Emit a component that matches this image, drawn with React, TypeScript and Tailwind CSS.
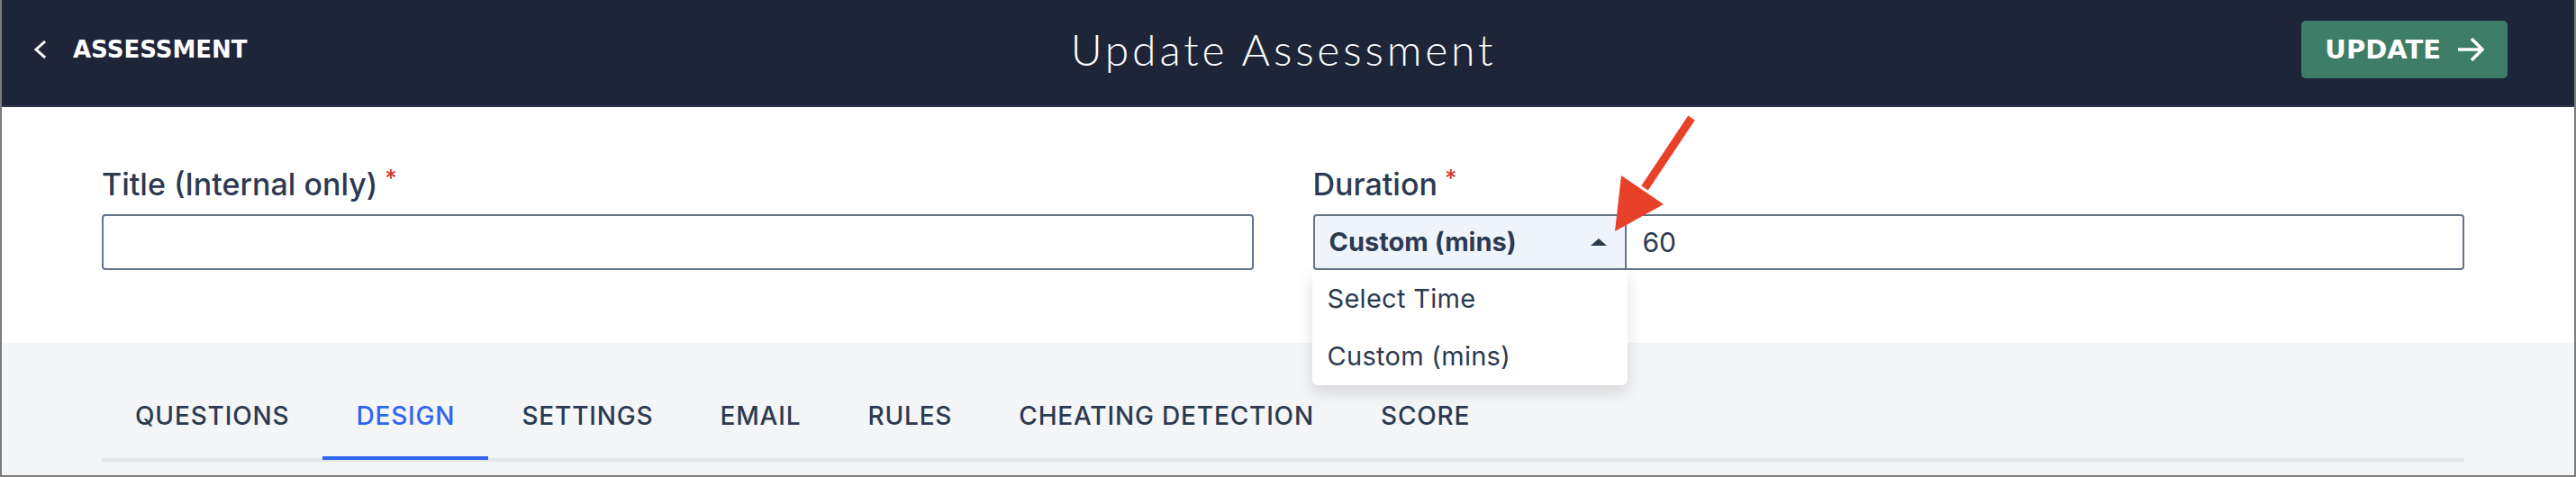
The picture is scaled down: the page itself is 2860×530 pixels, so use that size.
import React, { useState } from 'react';

const TABS = ['QUESTIONS', 'DESIGN', 'SETTINGS', 'EMAIL', 'RULES', 'CHEATING DETECTION', 'SCORE'];

const DURATION_OPTIONS = ['Select Time', 'Custom (mins)'];

const Required = () => (
  <span className="ml-[8px] align-top text-[26px] leading-none text-[#cf3a2e]">*</span>
);

export default function App() {
  const [activeTab, setActiveTab] = useState('DESIGN');
  const [duration] = useState('Custom (mins)');

  return (
    <div className="relative flex h-[530px] w-[2860px] flex-col overflow-hidden border-x-2 border-b-2 border-[#7c7c7c] bg-[#f4f5f7] font-['Inter',sans-serif] text-[#2c3a51]">
      {/* top bar */}
      <header className="grid h-[119px] shrink-0 grid-cols-[1fr_auto_1fr] items-center border-b-2 border-[#2f3750] bg-[#1f2539] pb-[7px] text-white">
        <div className="flex items-center gap-[30px] pl-[35px]">
          <svg width="14" height="20" viewBox="0 0 14 20" fill="none">
            <polyline points="12,2 3,10 12,18" stroke="white" strokeWidth="3" strokeLinecap="square" />
          </svg>
          <span className="font-['DejaVu_Sans',sans-serif] text-[26px] font-bold leading-none">ASSESSMENT</span>
        </div>
        <h1 className="pr-[10px] font-['Lato',sans-serif] text-[48px] font-light leading-none tracking-[0.08em]">Update Assessment</h1>
        <div className="flex justify-end pr-[74px]">
          <button className="flex h-[64px] items-center gap-[18px] rounded-[5px] bg-[#3e7d67] px-[26px]">
            <span className="font-['DejaVu_Sans',sans-serif] text-[29px] font-bold leading-none">UPDATE</span>
            <svg width="30" height="28" viewBox="0 0 30 28" fill="none">
              <path d="M1 14h27M16 2l12 12-12 12" stroke="white" strokeWidth="3.5" />
            </svg>
          </button>
        </div>
      </header>

      {/* form */}
      <section className="relative z-10 grid h-[262px] shrink-0 grid-cols-2 gap-[66px] bg-white pl-[111px] pr-[122px] pt-[66px]">
        <div>
          <label className="block text-[34px] font-medium leading-[40px]">
            Title (Internal only)
            <Required />
          </label>
          <input className="mt-[13px] block h-[62px] w-full rounded-[4px] border-2 border-[#64748b] bg-white px-[16px] text-[29px] outline-none" />
        </div>
        <div>
          <label className="block text-[34px] font-medium leading-[40px]">
            Duration
            <Required />
          </label>
          <div className="relative mt-[13px] flex h-[62px]">
            <div className="flex w-[348px] items-center justify-between rounded-l-[4px] border-2 border-[#64748b] bg-[#eff3fb] pl-[16px] pr-[20px]">
              <span className="text-[29px] font-bold">{duration}</span>
              <svg width="18" height="8" viewBox="0 0 18 8">
                <polygon points="0,8 9,0 18,8" fill="#2c3a51" />
              </svg>
            </div>
            <div className="flex flex-1 items-center rounded-r-[4px] border-2 border-l-0 border-[#64748b] pl-[18px] text-[30px]">
              60
            </div>
            <ul className="absolute left-[-1px] top-[62px] w-[350px] rounded-b-[6px] bg-white shadow-[0_8px_18px_rgba(0,0,0,0.13)]">
              {DURATION_OPTIONS.map((opt) => (
                <li key={opt} className="flex h-[64px] items-center px-[17px] text-[29px] tracking-[0.01em]">
                  {opt}
                </li>
              ))}
            </ul>
          </div>
        </div>
      </section>

      {/* tabs */}
      <div className="flex-1 pl-[111px] pr-[122px] pt-[40px]">
        <nav className="flex border-b-4 border-[#e4e5e7]">
          {TABS.map((tab) => (
            <button
              key={tab}
              onClick={() => setActiveTab(tab)}
              className={`relative flex h-[88px] items-center px-[37px] pb-[7px] text-[28px] font-medium tracking-[0.03em] ${
                activeTab === tab ? 'text-[#2f65ef]' : 'text-[#2c3a51]'
              }`}
            >
              {tab}
              {activeTab === tab && <span className="absolute bottom-[-2px] left-0 right-0 h-[4px] bg-[#2f65ef]" />}
            </button>
          ))}
        </nav>
      </div>

      {/* annotation arrow */}
      <svg className="absolute left-[1770px] top-[120px] z-20" width="120" height="150" viewBox="1770 120 120 150">
        <line x1="1876" y1="131" x2="1824" y2="209" stroke="#e8412a" strokeWidth="9" />
        <polygon points="1791,257 1845,227 1798,195" fill="#e8412a" />
      </svg>
    </div>
  );
}
